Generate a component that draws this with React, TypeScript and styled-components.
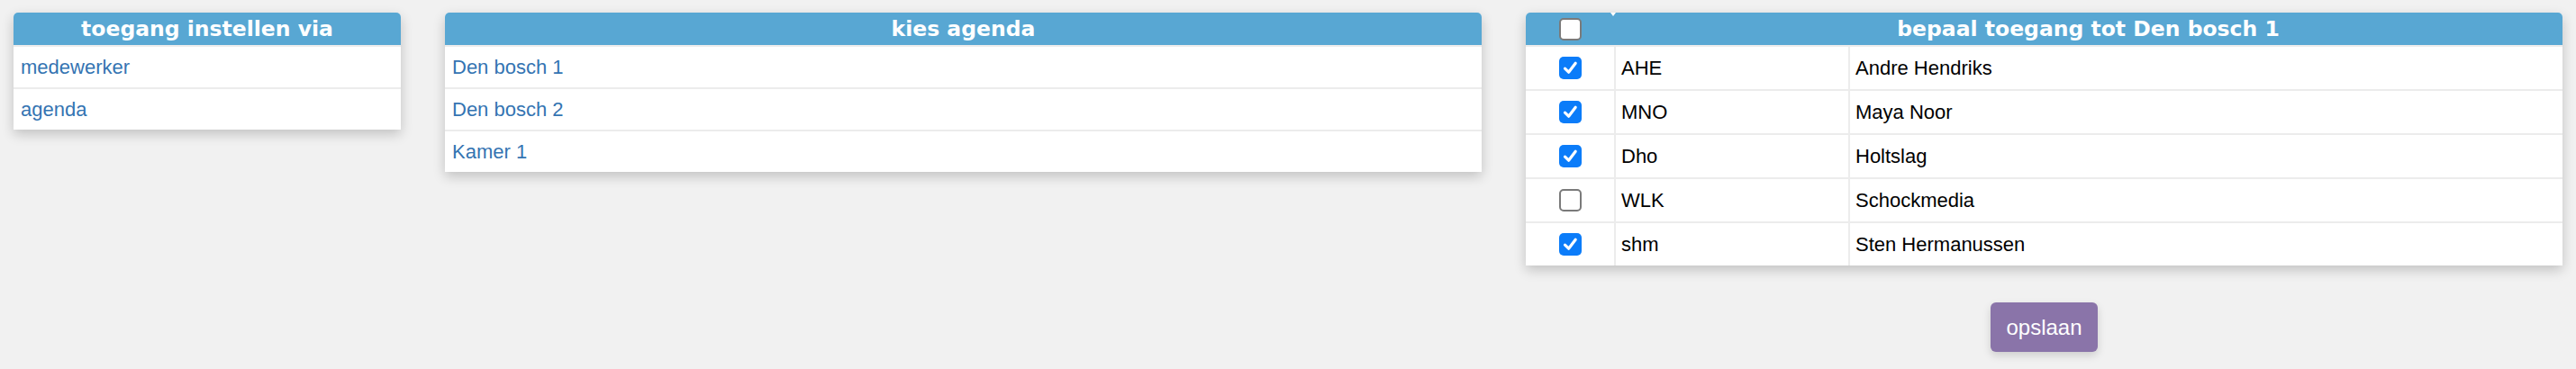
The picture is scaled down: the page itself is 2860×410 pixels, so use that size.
import React from "react";
import styled, { createGlobalStyle } from "styled-components";

const Global = createGlobalStyle`
  html, body { margin: 0; padding: 0; background: #f1f1f1; }
  body { font-family: "Liberation Sans", Arial, sans-serif; }
`;

const Page = styled.div`
  display: flex;
  align-items: flex-start;
  gap: 49px;
  padding: 14px 15px;
`;

const Column = styled.div<{ $width?: number }>`
  display: flex;
  flex-direction: column;
  align-items: stretch;
  ${(p) => (p.$width ? `width: ${p.$width}px; flex: none;` : `flex: 1; min-width: 0;`)}
`;

const Panel = styled.div`
  background: #fff;
  border-radius: 5px 5px 0 0;
  box-shadow: 0 5px 14px rgba(0, 0, 0, 0.2);
  overflow: hidden;
`;

const Header = styled.div`
  height: 36px;
  background: #58a7d3;
  color: #fff;
  font-family: "DejaVu Sans", Verdana, sans-serif;
  font-weight: bold;
  font-size: 23.5px;
  display: flex;
  align-items: center;
  justify-content: center;
  white-space: nowrap;
`;

const LinkRow = styled.a`
  display: flex;
  align-items: center;
  height: 45px;
  border-top: 2px solid #ececec;
  padding: 0 8px;
  color: #3474b2;
  font-size: 22px;
  text-decoration: none;
  cursor: pointer;
`;

const TableHead = styled.div`
  display: grid;
  grid-template-columns: 98px 1fr;
  height: 36px;
  background: #58a7d3;
`;

const HeadCheckCell = styled.div`
  position: relative;
  display: flex;
  align-items: center;
  justify-content: center;
  &::after {
    content: "";
    position: absolute;
    right: -2px;
    top: 0;
    border-left: 3px solid transparent;
    border-right: 3px solid transparent;
    border-top: 4px solid #fff;
  }
`;

const HeadTitle = styled.div`
  display: flex;
  align-items: center;
  justify-content: center;
  color: #fff;
  font-family: "DejaVu Sans", Verdana, sans-serif;
  font-weight: bold;
  font-size: 23.5px;
  white-space: nowrap;
`;

const Row = styled.div`
  display: grid;
  grid-template-columns: 98px 260px 1fr;
  height: 47px;
  border-top: 2px solid #ececec;
`;

const Cell = styled.div<{ $center?: boolean }>`
  display: flex;
  align-items: center;
  justify-content: ${(p) => (p.$center ? "center" : "flex-start")};
  padding: 0 6px;
  font-size: 22px;
  color: #000;
  & + & {
    border-left: 2px solid #ececec;
  }
`;

const Box = styled.span<{ $checked: boolean }>`
  box-sizing: border-box;
  width: 25px;
  height: 25px;
  border-radius: 5px;
  display: inline-flex;
  align-items: center;
  justify-content: center;
  background: ${(p) => (p.$checked ? "#0b7cf9" : "#fff")};
  border: ${(p) => (p.$checked ? "none" : "2px solid #7a7a7a")};
`;

const Footer = styled.div`
  display: flex;
  justify-content: center;
  margin-top: 41px;
`;

const SaveButton = styled.button`
  height: 55px;
  padding: 0 17px;
  border: none;
  border-radius: 6px;
  background: #8a74a9;
  color: #fff;
  font-family: "Liberation Sans", Arial, sans-serif;
  font-size: 24px;
  box-shadow: 0 4px 10px rgba(0, 0, 0, 0.15);
  cursor: pointer;
`;

const CheckBox = ({ checked }: { checked: boolean }) => (
  <Box $checked={checked} role="checkbox" aria-checked={checked}>
    {checked && (
      <svg width="25" height="25" viewBox="0 0 25 25">
        <path
          d="M6.5 13.2 L10.6 17.2 L18.2 7.2"
          fill="none"
          stroke="#fff"
          strokeWidth="3.2"
          strokeLinecap="round"
          strokeLinejoin="round"
        />
      </svg>
    )}
  </Box>
);

const people = [
  { code: "AHE", name: "Andre Hendriks", on: true },
  { code: "MNO", name: "Maya Noor", on: true },
  { code: "Dho", name: "Holtslag", on: true },
  { code: "WLK", name: "Schockmedia", on: false },
  { code: "shm", name: "Sten Hermanussen", on: true },
];

export default function App() {
  return (
    <>
      <Global />
      <Page>
        <Column $width={430}>
          <Panel>
            <Header>toegang instellen via</Header>
            <LinkRow>medewerker</LinkRow>
            <LinkRow>agenda</LinkRow>
          </Panel>
        </Column>
        <Column>
          <Panel>
            <Header>kies agenda</Header>
            <LinkRow>Den bosch 1</LinkRow>
            <LinkRow>Den bosch 2</LinkRow>
            <LinkRow>Kamer 1</LinkRow>
          </Panel>
        </Column>
        <Column>
          <Panel>
            <TableHead>
              <HeadCheckCell>
                <CheckBox checked={false} />
              </HeadCheckCell>
              <HeadTitle>bepaal toegang tot Den bosch 1</HeadTitle>
            </TableHead>
            {people.map((p) => (
              <Row key={p.code}>
                <Cell $center>
                  <CheckBox checked={p.on} />
                </Cell>
                <Cell>{p.code}</Cell>
                <Cell>{p.name}</Cell>
              </Row>
            ))}
          </Panel>
          <Footer>
            <SaveButton>opslaan</SaveButton>
          </Footer>
        </Column>
      </Page>
    </>
  );
}
